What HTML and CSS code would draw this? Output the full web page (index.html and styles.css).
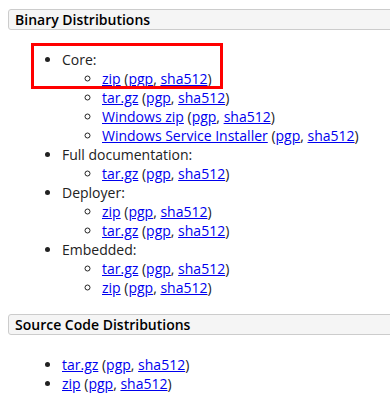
FILE: index.html
```html
<!DOCTYPE html>
<html lang="en">
<head>
  <meta charset="UTF-8">
  <title>Downloads</title>
  <link rel="stylesheet" href="styles.css">
</head>
<body>
  <div class="page">
    <h3 class="section-title">Binary Distributions</h3>
    <div class="section-body">
      <ul>
        <li>Core:
          <ul>
            <li><a href="#">zip</a> (<a href="#">pgp</a>, <a href="#">sha512</a>)</li>
            <li><a href="#">tar.gz</a> (<a href="#">pgp</a>, <a href="#">sha512</a>)</li>
            <li><a href="#">Windows zip</a> (<a href="#">pgp</a>, <a href="#">sha512</a>)</li>
            <li><a href="#">Windows Service Installer</a> (<a href="#">pgp</a>, <a href="#">sha512</a>)</li>
          </ul>
        </li>
        <li>Full documentation:
          <ul>
            <li><a href="#">tar.gz</a> (<a href="#">pgp</a>, <a href="#">sha512</a>)</li>
          </ul>
        </li>
        <li>Deployer:
          <ul>
            <li><a href="#">zip</a> (<a href="#">pgp</a>, <a href="#">sha512</a>)</li>
            <li><a href="#">tar.gz</a> (<a href="#">pgp</a>, <a href="#">sha512</a>)</li>
          </ul>
        </li>
        <li>Embedded:
          <ul>
            <li><a href="#">tar.gz</a> (<a href="#">pgp</a>, <a href="#">sha512</a>)</li>
            <li><a href="#">zip</a> (<a href="#">pgp</a>, <a href="#">sha512</a>)</li>
          </ul>
        </li>
      </ul>
    </div>

    <h3 class="section-title">Source Code Distributions</h3>
    <div class="section-body">
      <ul>
        <li><a href="#">tar.gz</a> (<a href="#">pgp</a>, <a href="#">sha512</a>)</li>
        <li><a href="#">zip</a> (<a href="#">pgp</a>, <a href="#">sha512</a>)</li>
      </ul>
    </div>
  </div>

  <!-- marcador rojo sobre "Core" -->
  <div class="highlight"></div>
</body>
</html>
```

FILE: styles.css
```css
html, body {
  overflow: hidden;
}

body {
  margin: 8px 0 8px 8px;
  background: #ffffff;
  color: #222;
  font-family: 'Open Sans', 'Noto Sans', sans-serif;
  font-size: 14px;
  position: relative;
}

/* Cabeceras de sección */
.section-title {
  margin: 1px -20px 0 0;
  padding: 0 6px;
  font-size: 14px;
  font-weight: 600;
  line-height: 19px;
  color: #000;
  background-color: #f5f5f5;
  border: 1px solid #cccccc;
  border-radius: 3px;
}

.section-body {
  padding: 20px 0 16px 14px;
}

ul {
  margin: 0;
  padding-left: 40px;
  line-height: 19px;
}

ul ul {
  list-style-type: circle;
}

a {
  color: #0000ee;
  text-decoration: underline;
}

.highlight {
  position: absolute;
  left: 23px;
  top: 35px;
  width: 186px;
  height: 40px;
  border: 3px solid #ff0000;
}
```
